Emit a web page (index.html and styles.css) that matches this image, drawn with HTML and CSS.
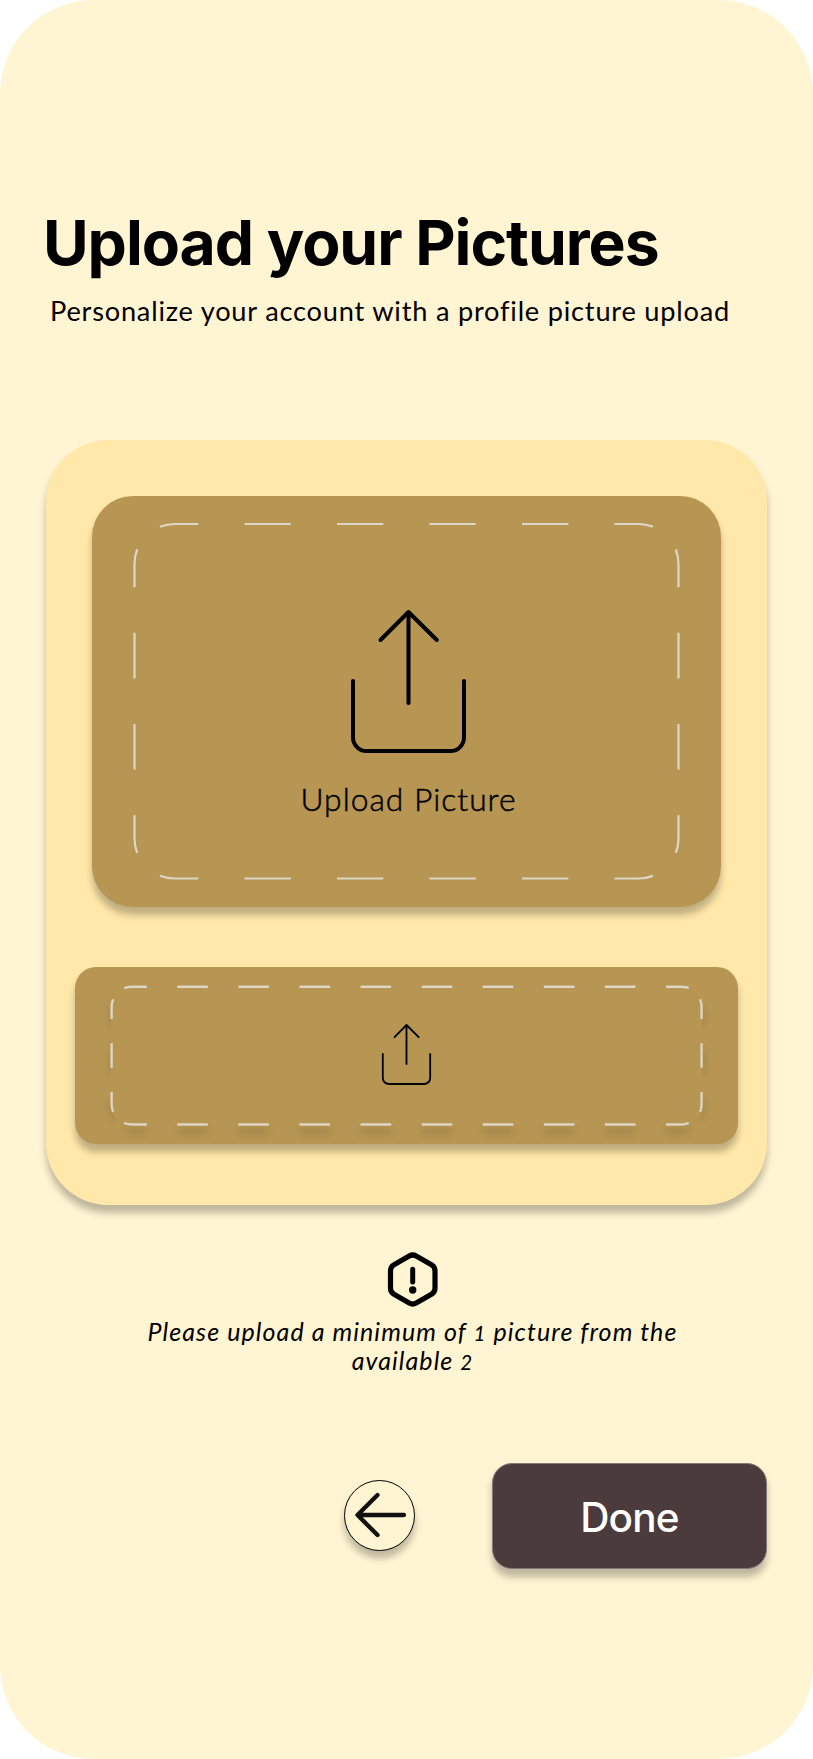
FILE: index.html
```html
<!DOCTYPE html>
<html lang="en">
<head>
<meta charset="utf-8">
<title>Upload your Pictures</title>
<link rel="stylesheet" href="styles.css">
</head>
<body>
<main class="screen">
  <header class="intro">
    <h1 class="title">Upload your Pictures</h1>
    <p class="subtitle">Personalize your account with a profile picture upload</p>
  </header>

  <section class="card">
    <button class="drop drop-large" type="button">
      <svg class="outline" viewBox="92 496 629.5 410.5" aria-hidden="true">
        <g class="dash dash-wide">
          <path d="M160 526.7A40 40 0 0 1 174.5 524H638.5A40 40 0 0 1 653 526.7"/>
          <path d="M160 875.8A40 40 0 0 0 174.5 878.5H638.5A40 40 0 0 0 653 875.8"/>
        </g>
        <g class="dash dash-tall">
          <path d="M137.2 549.5A40 40 0 0 0 134.5 564V838.5A40 40 0 0 0 137.2 853"/>
          <path d="M675.8 549.5A40 40 0 0 1 678.5 564V838.5A40 40 0 0 1 675.8 853"/>
        </g>
      </svg>
      <svg class="icon-large" viewBox="351 609 116 145" aria-hidden="true">
        <path d="M353 681V737.5A13.500 13.500 0 0 0 366.500 751H450.500A13.500 13.500 0 0 0 464 737.500V681M408.500 703V612M380.500 640L408.500 612L436.800 640"/>
      </svg>
      <span class="drop-label">Upload Picture</span>
    </button>

    <button class="drop drop-small" type="button" aria-label="Upload second picture">
      <svg class="outline" viewBox="75 967 663 177" aria-hidden="true">
        <g class="dash dash-cast">
          <g class="dash-row">
            <path d="M124.200 988.2A20 20 0 0 1 131.700 986.800H681.500A20 20 0 0 1 689 988.200"/>
            <path d="M124.200 1122.900A20 20 0 0 0 131.700 1124.300H681.500A20 20 0 0 0 689 1122.900"/>
          </g>
          <g class="dash-col">
            <path d="M113.100 999.300A20 20 0 0 0 111.700 1006.800V1104.300A20 20 0 0 0 113.100 1111.800"/>
            <path d="M700.100 999.300A20 20 0 0 1 701.500 1006.800V1104.300A20 20 0 0 1 700.100 1111.800"/>
          </g>
        </g>
        <rect class="inner" x="110.700" y="985.800" width="591.800" height="139.500" rx="21"/>
        <g class="dash">
          <g class="dash-row">
            <path d="M124.200 988.2A20 20 0 0 1 131.700 986.800H681.500A20 20 0 0 1 689 988.200"/>
            <path d="M124.200 1122.900A20 20 0 0 0 131.700 1124.300H681.500A20 20 0 0 0 689 1122.900"/>
          </g>
          <g class="dash-col">
            <path d="M113.100 999.300A20 20 0 0 0 111.700 1006.800V1104.300A20 20 0 0 0 113.100 1111.800"/>
            <path d="M700.100 999.300A20 20 0 0 1 701.500 1006.800V1104.300A20 20 0 0 1 700.100 1111.800"/>
          </g>
        </g>
      </svg>
      <svg class="icon-small" viewBox="381 1023 51 63" aria-hidden="true">
        <path d="M382.800 1054V1078A6 6 0 0 0 388.800 1084H424.200A6 6 0 0 0 430.200 1078V1054M406.500 1064V1025M394.500 1037.200L406.500 1025L418.700 1037.200"/>
      </svg>
    </button>
  </section>

  <section class="notice">
    <svg class="notice-icon" viewBox="387 1251 52 57" aria-hidden="true">
      <path class="hex" d="M409.200 1256Q412.700 1254 416.200 1256L431.500 1264.800Q435 1266.800 435 1270.800V1288.300Q435 1292.300 431.500 1294.300L416.200 1303Q412.700 1305 409.200 1303L394 1294.300Q390.500 1292.300 390.500 1288.300V1270.800Q390.500 1266.800 394 1264.800Z"/>
      <path class="bar" d="M412.700 1269.300V1282"/>
      <circle cx="412.700" cy="1290" r="3.700"/>
    </svg>
    <p class="notice-text">Please upload a minimum of <span class="low">1</span> picture from the<br>available <span class="low">2</span></p>
  </section>

  <nav class="actions">
    <button class="back" type="button" aria-label="Back">
      <svg class="back-icon" viewBox="354 1492 53 46" aria-hidden="true">
        <path d="M404 1515H357.500M377.500 1495L357.500 1515L377.500 1535"/>
      </svg>
    </button>
    <button class="done" type="button">Done</button>
  </nav>
</main>
</body>
</html>
```
FILE: styles.css
```css
* { box-sizing: border-box; }

body {
  margin: 0;
  background: #fff;
  color: #000;
}

button {
  margin: 0;
  padding: 0;
  border: 0;
  color: inherit;
  font: inherit;
}

svg { display: block; fill: none; }

.screen {
  display: flex;
  flex-direction: column;
  width: 813px;
  height: 1759px;
  padding: 207px 46px 0;
  border-radius: 94px;
  background: #fff5d3;
}

.intro { height: 233px; }

.title {
  margin: 0 0 0 -3px;
  font: 700 62.4px/72px Inter, sans-serif;
  letter-spacing: -1.05px;
  white-space: nowrap;
}

.subtitle {
  margin: 16px 0 0 4px;
  font: 400 27.2px/32px Lato, sans-serif;
  letter-spacing: 0.79px;
  white-space: nowrap;
}

.card {
  display: flex;
  flex-direction: column;
  align-items: center;
  gap: 60.5px;
  height: 764.500px;
  padding-top: 56px;
  border-radius: 62px;
  background: #ffe8a9;
  box-shadow: 0 7.5px 7.5px rgba(0, 0, 0, 0.25);
}

.drop {
  display: grid;
  justify-items: center;
  background: #b79653;
  box-shadow: 0 7.5px 7.5px rgba(0, 0, 0, 0.25);
}

.drop-large {
  grid-template-rows: 113px 145px 1fr;
  width: 629.5px;
  height: 410.500px;
  border-radius: 41px;
}

.drop-small {
  grid-template-rows: 56px 1fr;
  width: 663px;
  height: 177px;
  border-radius: 21px;
}

/* The outline fills the whole drop area, under the icon and label. */
.outline {
  grid-row: 1 / -1;
  grid-column: 1;
  width: 100%;
  height: 100%;
}

.dash { stroke: #ded6c6; stroke-width: 2.2; }
.dash-wide { stroke-dasharray: 38.6 46.25 46.25 46.25 46.25 46.25 46.25 46.25 46.25 46.25 38.6 46.25; }
.dash-tall { stroke-dasharray: 38 45.6 45.6 45.6 45.6 45.6 38 45.6; }
.dash-row { stroke-dasharray: 22.7 30.5 30.55 30.55 30.55 30.55 30.55 30.55 30.55 30.55 30.55 30.55 30.55 30.55 30.55 30.55 30.55 30.55 22.7 30; }
.dash-col { stroke-dasharray: 19.8 24.3 24.5 24.3 19.8 30; }
.dash-cast { filter: drop-shadow(0 7.5px 3.75px rgba(0, 0, 0, 0.25)); }
.inner { fill: #b79653; }

.icon-large {
  grid-row: 2;
  grid-column: 1;
  width: 116px;
  height: 145px;
  margin-left: 4px;
  stroke: #000;
  stroke-width: 4;
  stroke-linecap: round;
  stroke-linejoin: round;
}

.drop-label {
  grid-row: 3;
  grid-column: 1;
  margin: 26px 0 0 4px;
  font: 300 31.800px/38px Lato, sans-serif;
  letter-spacing: 1px;
  -webkit-text-stroke: 0.5px #000;
}

.icon-small {
  grid-row: 2;
  grid-column: 1;
  width: 51px;
  height: 63px;
  stroke: #000;
  stroke-width: 1.8;
  stroke-linecap: round;
  stroke-linejoin: round;
}

.notice {
  display: flex;
  flex-direction: column;
  align-items: center;
  height: 258.500px;
  padding: 46.500px 0 0 12px;
}

.notice-icon { width: 52px; height: 57px; stroke: #000; }
.notice-icon .hex { stroke-width: 5.2; }
.notice-icon .bar { stroke-width: 5; stroke-linecap: round; }
.notice-icon circle { fill: #000; stroke: none; }

.notice-text {
  margin: 8.5px 0 0;
  font: italic 400 25px/29.400px Lato, sans-serif;
  letter-spacing: 1.08px;
  text-align: center;
  white-space: nowrap;
}

.low { font-size: 0.82em; line-height: 1; }

.actions {
  display: flex;
  align-items: flex-start;
  justify-content: flex-end;
  gap: 77px;
}

.back {
  display: grid;
  place-items: center;
  width: 71px;
  height: 71px;
  margin-top: 16.500px;
  border: 1px solid #000;
  border-radius: 50%;
  background: #fff5d3;
  box-shadow: 0 7.5px 7.5px rgba(0, 0, 0, 0.25);
}

.back-icon {
  width: 53px;
  height: 46px;
  margin-left: 2px;
  stroke: #111;
  stroke-width: 4.3;
  stroke-linecap: round;
  stroke-linejoin: round;
}

.done {
  width: 275px;
  height: 106px;
  padding-top: 3px;
  border: 1px solid #84797a;
  border-radius: 20px;
  background: #4b3b3c;
  box-shadow: 0 7.5px 7.5px rgba(0, 0, 0, 0.25);
  color: #fff;
  font: 500 40.500px/48px Inter, sans-serif;
  letter-spacing: -0.8px;
}
```
